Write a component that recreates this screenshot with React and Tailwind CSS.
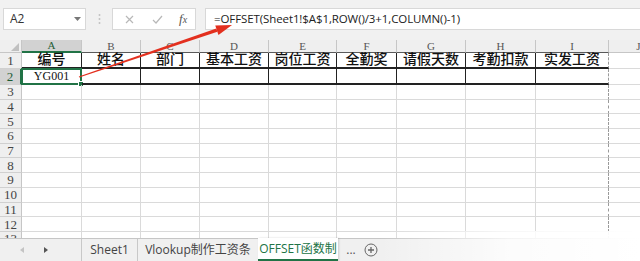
import React from 'react'

const colWidths = [60, 59, 59, 69, 68, 60, 69, 70, 73, 60]
const letters = ['A', 'B', 'C', 'D', 'E', 'F', 'G', 'H', 'I', 'J']
const titles = ['编号', '姓名', '部门', '基本工资', '岗位工资', '全勤奖', '请假天数', '考勤扣款', '实发工资']

const serif = { fontFamily: '"Liberation Serif", "DejaVu Serif", "Noto Sans CJK SC", serif' }
const cjk = { fontFamily: '"Liberation Serif", "Noto Sans CJK SC", serif' }
const ui = { fontFamily: '"Open Sans", "Noto Sans CJK SC", sans-serif' }

function ColumnHeader() {
  return (
    <div className="flex h-[13px] bg-[#efefef]">
      <div className="relative w-[22px] shrink-0 border-r border-b border-[#c6c6c6]">
        <svg className="absolute right-[2px] bottom-[1px]" width="8" height="8" viewBox="0 0 8 8">
          <polygon points="8,0 8,8 0,8" fill="#c0c0c0" />
        </svg>
      </div>
      {letters.map((l, i) => {
        const selected = i === 0
        return (
          <div
            key={l}
            style={{ width: colWidths[i], ...serif }}
            className={
              'flex shrink-0 items-center justify-center border-r text-[11px] leading-none ' +
              (selected
                ? 'border-b-2 border-r-[#c6c6c6] border-b-[#217346] bg-[#d2d2d2] text-[#1e5c36]'
                : i < 9
                ? 'border-b border-r-[#c6c6c6] border-b-[#5a5a5a] text-[#555]'
                : 'border-b border-r-[#c6c6c6] border-b-[#c6c6c6] text-[#555]')
            }
          >
            {l}
          </div>
        )
      })}
      <div className="flex-1 border-b border-[#c6c6c6]" />
    </div>
  )
}

function RowHeader({ n, h, selected }) {
  return (
    <div
      style={{ height: h, ...serif }}
      className={
        'flex w-[22px] shrink-0 items-center justify-center border-b border-[#d0d0d0] text-[13px] leading-none ' +
        (selected ? 'border-r-2 border-r-[#217346] bg-[#d2d2d2] text-[#1e5c36]' : 'border-r border-r-[#c6c6c6] bg-[#efefef] text-[#444]')
      }
    >
      {n}
    </div>
  )
}

function Row({ n, h, cells, kind }) {
  return (
    <div className="flex">
      <RowHeader n={n} h={h} selected={n === 2} />
      {colWidths.map((w, i) => {
        let cls = 'border-r border-b border-b-[#dadada] '
        if (kind && i < 9) {
          cls = 'border-r border-b-2 border-b-[#222] '
        }
        if (i === 8) cls += 'border-r-[#9a9a9a] [border-right-style:dashed]'
        else if (kind && i < 9) cls += 'border-r-[#222]'
        else cls += 'border-r-[#dadada]'
        return (
          <div
            key={i}
            style={{ width: w, height: h, ...cjk }}
            className={'relative flex shrink-0 items-center justify-center text-[#111] ' + cls}
          >
            {cells && cells[i] ? (
              <span className={kind === 'title' ? 'text-[14px] font-medium leading-none' : 'text-[12px] leading-none'}>
                {cells[i]}
              </span>
            ) : null}
            {kind === 'data' && i === 0 ? (
              <div className="absolute -top-[1px] -left-[1px] -right-[1px] -bottom-[2px] border-2 border-[#217346]">
                <div className="absolute -right-[4px] -bottom-[4px] h-[6px] w-[6px] border border-white bg-[#217346]" />
              </div>
            ) : null}
          </div>
        )
      })}
      <div style={{ height: h }} className="flex-1 border-b border-[#dadada]" />
    </div>
  )
}

export default function App() {
  const rest = [3, 4, 5, 6, 7, 8, 9, 10, 11, 12, 13]
  return (
    <div className="relative flex h-[261px] w-[640px] flex-col overflow-hidden bg-white">
      {/* toolbar */}
      <div className="flex h-[40px] shrink-0 items-start bg-[#f1f1f1] pt-[8px]" style={ui}>
        <div className="ml-[3px] flex h-[22px] w-[83px] items-center justify-between border border-[#d8d8d8] bg-white pl-[6px] pr-[4px]">
          <span className="text-[12px] text-[#333]">A2</span>
          <svg width="7" height="4" viewBox="0 0 7 4"><polygon points="0,0 7,0 3.5,4" fill="#777" /></svg>
        </div>
        <div className="flex h-[22px] w-[26px] items-center justify-center">
          <svg width="3" height="12" viewBox="0 0 3 12">
            <circle cx="1.5" cy="2" r="1" fill="#c2c2c2" />
            <circle cx="1.5" cy="6" r="1" fill="#c2c2c2" />
            <circle cx="1.5" cy="10" r="1" fill="#c2c2c2" />
          </svg>
        </div>
        <div className="flex h-[22px] w-[84px] items-center border border-[#d8d8d8] bg-white">
          <svg className="ml-[12px]" width="9" height="9" viewBox="0 0 9 9">
            <path d="M1 1 L8 8 M8 1 L1 8" stroke="#b8b8b8" strokeWidth="1.2" />
          </svg>
          <svg className="ml-[18px]" width="11" height="9" viewBox="0 0 11 9">
            <path d="M1 5 L4 8 L10 1" stroke="#b8b8b8" strokeWidth="1.2" fill="none" />
          </svg>
          <span className="ml-[16px] text-[13px] italic text-[#555]" style={serif}>
            f<span className="text-[10px]">x</span>
          </span>
        </div>
        <div className="ml-[9px] flex h-[22px] flex-1 items-center border border-r-0 border-[#d8d8d8] bg-white pl-[8px]">
          <span className="text-[11.5px] tracking-[-0.1px] text-[#222]">=OFFSET(Sheet1!$A$1,ROW()/3+1,COLUMN()-1)</span>
        </div>
      </div>

      {/* grid */}
      <div className="flex flex-1 flex-col overflow-hidden">
        <ColumnHeader />
        <Row n={1} h={16} cells={titles} kind="title" />
        <Row n={2} h={16} cells={['YG001']} kind="data" />
        {rest.map((n) => (
          <Row key={n} n={n} h={14.7} />
        ))}
      </div>

      {/* sheet tabs */}
      <div className="relative flex h-[23px] shrink-0 items-stretch border-t border-[#c6c6c6] bg-[#f0f0f0] text-[12px] text-[#444]" style={ui}>
        <div className="flex w-[82px] items-center border-r border-[#c8c8c8]">
          <svg className="ml-[20px]" width="4" height="6" viewBox="0 0 4 6"><polygon points="4,0 4,6 0,3" fill="#c4c4c4" /></svg>
          <svg className="ml-[20px]" width="4" height="6" viewBox="0 0 4 6"><polygon points="0,0 0,6 4,3" fill="#555" /></svg>
        </div>
        <div className="flex w-[56px] items-center justify-center border-r border-[#c8c8c8]">Sheet1</div>
        <div className="flex w-[120px] items-center justify-center">Vlookup制作工资条</div>
        <div className="-mt-px flex w-[80px] items-center justify-center border-b-2 border-[#217346] bg-white text-[#217346] shadow-[1px_0_2px_rgba(0,0,0,0.15)]">
          OFFSET函数制
        </div>
        <div className="flex w-[26px] items-center justify-center text-[#555]">...</div>
        <div className="flex items-center">
          <svg width="14" height="14" viewBox="0 0 14 14">
            <circle cx="7" cy="7" r="6" fill="none" stroke="#666" strokeWidth="1" />
            <path d="M7 4 V10 M4 7 H10" stroke="#666" strokeWidth="1.3" />
          </svg>
        </div>
        <div className="pointer-events-none absolute top-[-8px] right-0 bottom-0 w-[260px] bg-gradient-to-r from-transparent via-white/80 to-white" />
      </div>

      {/* red arrow */}
      <svg className="pointer-events-none absolute top-0 left-0" width="640" height="261">
        <polygon points="79.16,77.47 78.84,76.53 216.27,28.45 217.43,31.85" fill="#e3301f" />
        <polygon points="232,25 215.24,25.4 218.46,34.9" fill="#e3301f" />
      </svg>
    </div>
  )
}
